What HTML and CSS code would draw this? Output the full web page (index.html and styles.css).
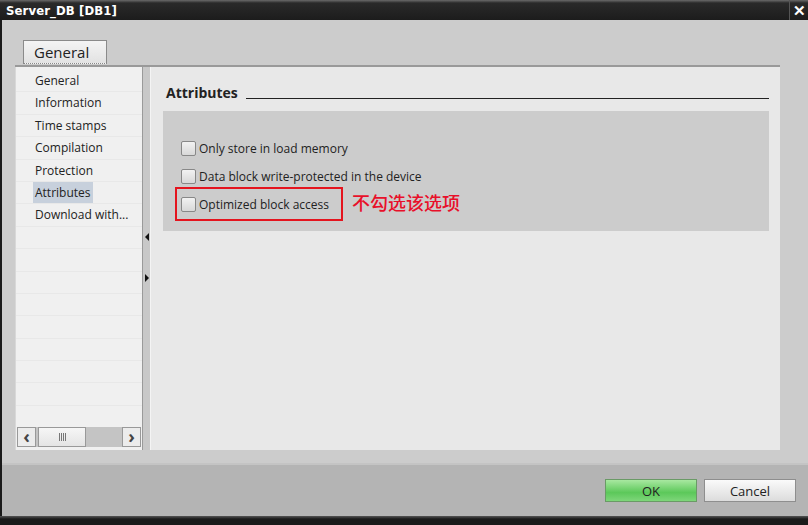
FILE: index.html
```html
<!DOCTYPE html>
<html lang="en">
<head>
  <meta charset="UTF-8">
  <title>Server_DB [DB1]</title>
  <link rel="stylesheet" href="styles.css">
</head>
<body>
  <div class="window">
    <div class="titlebar">
      <span class="title">Server_DB [DB1]</span>
      <span class="close">&#x2715;</span>
    </div>
    <div class="main">
      <div class="tabs">
        <div class="tab">General</div>
      </div>
      <div class="panels">
        <div class="nav">
          <ul class="nav-list">
            <li>General</li>
            <li>Information</li>
            <li>Time stamps</li>
            <li>Compilation</li>
            <li>Protection</li>
            <li><span class="sel">Attributes</span></li>
            <li>Download with...</li>
            <li></li><li></li><li></li><li></li><li></li><li></li><li></li><li></li><li></li>
          </ul>
          <div class="hscroll">
            <span class="sbtn">&#x2039;</span>
            <span class="thumb"><span class="grip"></span></span>
            <span class="track"></span>
            <span class="sbtn">&#x203A;</span>
          </div>
        </div>
        <div class="splitter">
          <span class="arrow left"></span>
          <span class="arrow right"></span>
        </div>
        <div class="content">
          <div class="section-head">
            <span class="section-title">Attributes</span>
            <span class="section-line"></span>
          </div>
          <div class="options">
            <label class="opt"><span class="box"></span>Only store in load memory</label>
            <label class="opt"><span class="box"></span>Data block write-protected in the device</label>
            <div class="opt-row">
              <label class="opt marked"><span class="box"></span>Optimized block access</label>
              <span class="note">不勾选该选项</span>
            </div>
          </div>
        </div>
      </div>
    </div>
    <div class="footer">
      <button class="btn ok">OK</button>
      <button class="btn">Cancel</button>
    </div>
    <div class="bottom"></div>
  </div>
</body>
</html>
```

FILE: styles.css
```css
html, body {
  margin: 0;
  padding: 0;
}
body {
  width: 808px;
  height: 525px;
  overflow: hidden;
  font-family: "Open Sans", "Liberation Sans", sans-serif;
  color: #222;
  background: #1a1a1a;
}
.window {
  display: flex;
  flex-direction: column;
  height: 525px;
}
.titlebar {
  height: 20px;
  flex-shrink: 0;
  background: linear-gradient(#6a6a6a 0, #2a2a2a 3px, #1c1c1c 100%);
  display: flex;
  align-items: center;
  justify-content: space-between;
  padding: 0 2px 0 6px;
}
.title {
  color: #fff;
  font-weight: bold;
  font-size: 13px;
  font-family: "DejaVu Sans Condensed", "Liberation Sans", sans-serif;
  letter-spacing: 0.1px;
}
.close {
  color: #fff;
  font-size: 15px;
  font-weight: bold;
  border-left: 1px solid #555;
  padding-left: 3px;
  line-height: 20px;
}
.main {
  background: #cccccc;
  height: 443px;
  flex-shrink: 0;
  box-sizing: border-box;
  padding: 19px 28px 0 13px;
  margin-left: 2px;
  display: flex;
  flex-direction: column;
}
.tabs {
  height: 26px;
  border-bottom: 2px solid #999;
  padding-left: 8px;
  display: flex;
  align-items: flex-end;
}
.tab {
  width: 84px;
  height: 24px;
  border: 1px solid #8a8a8a;
  border-bottom: 1px dotted #888;
  background: linear-gradient(#f4f4f4, #e2e2e2);
  font-size: 15px;
  line-height: 23px;
  box-sizing: border-box;
  padding-left: 10px;
  margin-bottom: 1px;
}
.panels {
  display: flex;
  height: 383px;
}
.nav {
  width: 126px;
  background: #f0f0f0;
  display: flex;
  flex-direction: column;
  border-left: 1px solid #d8d8d8;
}
.nav-list {
  list-style: none;
  margin: 0;
  padding: 3px 0 0 0;
  flex: 1;
  overflow: hidden;
}
.nav-list li {
  height: 22.4px;
  box-sizing: border-box;
  border-bottom: 1px solid #e8e8e8;
  font-size: 12px;
  line-height: 21px;
  padding-left: 19px;
  color: #222;
}
.sel {
  background: #c7d0dc;
  padding: 2px 2px;
  margin-left: -2px;
}
.hscroll {
  display: flex;
  height: 20px;
  margin: 0 1px 3px 1px;
  background: #c4c4c4;
}
.sbtn {
  width: 17px;
  border: 1px solid #999;
  background: #ececec;
  font-size: 18px;
  font-weight: bold;
  line-height: 16px;
  text-align: center;
  color: #444;
}
.thumb {
  width: 46px;
  margin-left: 2px;
  border: 1px solid #999;
  background: linear-gradient(#f6f6f6, #e4e4e4);
  display: flex;
  align-items: center;
  justify-content: center;
}
.grip {
  width: 7px;
  height: 8px;
  background: repeating-linear-gradient(90deg, #777 0 1px, transparent 1px 2px);
}
.track {
  flex: 1;
}
.splitter {
  width: 7px;
  background: #c8c8c8;
  border-left: 1px solid #9a9a9a;
  border-right: 1px solid #f4f4f4;
  display: flex;
  flex-direction: column;
  align-items: center;
  padding-top: 166px;
  gap: 33px;
}
.arrow {
  width: 0;
  height: 0;
  border-top: 4px solid transparent;
  border-bottom: 4px solid transparent;
}
.arrow.left {
  border-right: 4px solid #111;
}
.arrow.right {
  border-left: 4px solid #111;
}
.content {
  flex: 1;
  background: #e8e8e8;
  padding: 15px 11px 0 12px;
}
.section-head {
  display: flex;
  align-items: flex-end;
  height: 20px;
  padding-left: 3px;
}
.section-title {
  font-weight: bold;
  font-size: 14px;
  line-height: 18px;
  margin-right: 8px;
}
.section-line {
  flex: 1;
  height: 1px;
  background: #222;
  margin-bottom: 3px;
}
.options {
  margin-top: 9px;
  background: #cccccc;
  height: 120px;
  box-sizing: border-box;
  padding: 23px 0 0 12px;
}
.opt {
  display: flex;
  align-items: center;
  font-size: 12px;
  height: 28.5px;
  padding-left: 6px;
  white-space: nowrap;
}
.box {
  width: 13px;
  height: 13px;
  border: 1px solid #888;
  border-radius: 2px;
  background: linear-gradient(#f2f2f2, #d8d8d8);
  margin-right: 3px;
}
.opt-row {
  display: flex;
  align-items: center;
}
.marked {
  border: 2px solid #e4141e;
  height: 34px;
  width: 168px;
  box-sizing: border-box;
  padding-left: 4px;
  margin-top: -4px;
}
.note {
  color: #e8102a;
  font-size: 18px;
  font-weight: 500;
  font-family: "Noto Sans CJK SC", sans-serif;
  margin-left: 9px;
  margin-top: -8px;
}
.footer {
  height: 53px;
  flex-shrink: 0;
  background: #b4b4b4;
  margin-left: 2px;
  border-top: 2px solid #c4c4c4;
  display: flex;
  justify-content: flex-end;
  align-items: flex-start;
  gap: 7px;
  padding: 14px 12px 0 0;
  box-sizing: border-box;
}
.btn {
  width: 92px;
  height: 23px;
  border: 1px solid #8e8e8e;
  background: linear-gradient(#fafafa, #dcdcdc);
  font-family: "Open Sans", "Liberation Sans", sans-serif;
  font-size: 13px;
  color: #222;
  padding: 0;
}
.btn.ok {
  background: linear-gradient(#a8e8a0, #5cc85a 60%, #7ed67a);
  border-color: #6a9a66;
}
.bottom {
  flex: 1;
  background: linear-gradient(#555 0, #1a1a1a 3px);
}
```
